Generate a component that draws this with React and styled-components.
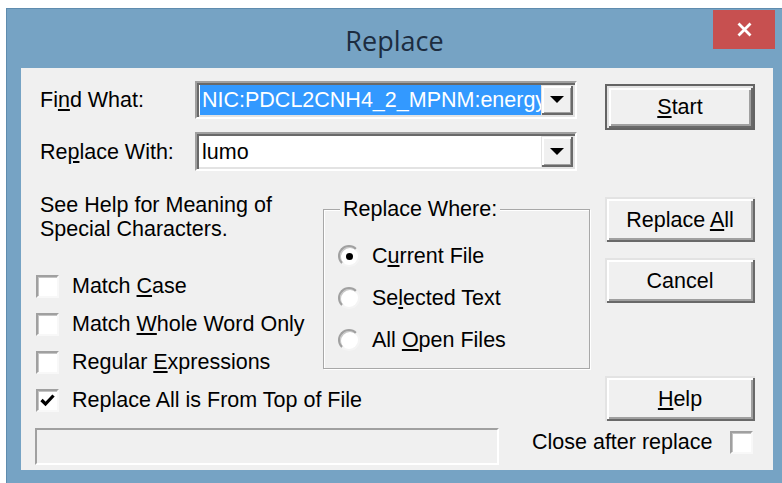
import styled, { createGlobalStyle } from 'styled-components';

const GlobalStyle = createGlobalStyle`
  html, body {
    margin: 0;
    padding: 0;
    background: #ffffff;
  }
  body {
    width: 782px;
    height: 483px;
    overflow: hidden;
    font-family: "Liberation Sans", Arial, sans-serif;
  }
`;

const Window = styled.div`
  box-sizing: border-box;
  margin: 8px 0 0 6px;
  width: 776px;
  height: 475px;
  background: #76a3c4;
  border-top: 1px solid #5f8cae;
  border-left: 1px solid #5f8cae;
  padding: 0 9px 13px 14px;
  display: flex;
  flex-direction: column;
`;

const TitleBar = styled.div`
  height: 59px;
  margin: 0 -9px 0 -14px;
  display: grid;
  grid-template-columns: 1fr auto 1fr;
`;

const Title = styled.div`
  grid-column: 2;
  align-self: center;
  padding-top: 3px;
  font-family: "Open Sans", "Noto Sans", sans-serif;
  font-size: 27px;
  color: #1c2c40;
`;

const CloseButton = styled.div`
  grid-column: 3;
  justify-self: end;
  align-self: start;
  margin: 1px 7px 0 0;
  width: 62px;
  height: 39px;
  background: #c75050;
  display: flex;
  align-items: center;
  justify-content: center;
`;

const Client = styled.div`
  flex: 1;
  background: #f0f0f0;
  font-size: 21.5px;
  line-height: 24px;
  color: #000;
  display: flex;
  flex-direction: column;
`;

const Key = styled.span`
  text-decoration: underline;
  text-underline-offset: 2px;
`;

/* top block: the two combo rows and the Start button */
const TopRow = styled.div`
  display: flex;
  padding-top: 13px;
`;

const Fields = styled.div`
  display: flex;
  flex-direction: column;
  gap: 13px;
  margin-left: 19px;
`;

const FieldRow = styled.div`
  display: flex;
  align-items: center;
`;

const FieldLabel = styled.div`
  width: 155px;
`;

const Combo = styled.div`
  box-sizing: border-box;
  display: flex;
  width: 382px;
  height: ${(p) => p.$h}px;
  padding: 2px;
  background: #fff;
  border: 2px solid;
  border-color: #a0a0a0 #ffffff #ffffff #a0a0a0;
  box-shadow: inset 2px 2px 0 #696969, inset -2px -2px 0 #e3e3e3;
`;

const Edit = styled.div`
  flex: 1;
  display: flex;
  align-items: center;
  overflow: hidden;
  white-space: nowrap;
  padding-left: 3px;
`;

const Selected = styled.div`
  align-self: stretch;
  display: flex;
  align-items: center;
  margin-left: -2px;
  padding-left: 2px;
  flex: 1;
  overflow: hidden;
  background: #3399ff;
  color: #fff;
`;

const DropButton = styled.div`
  box-sizing: border-box;
  width: 32px;
  background: #f0f0f0;
  display: flex;
  align-items: center;
  justify-content: center;
  box-shadow: inset 1px 1px 0 #e3e3e3, inset -2px -2px 0 #696969,
    inset 3px 3px 0 #ffffff, inset -3px -3px 0 #a0a0a0;
`;

const Button = styled.div`
  box-sizing: border-box;
  width: 150px;
  height: ${(p) => p.$h || 45}px;
  margin-top: ${(p) => p.$mt || 0}px;
  background: #f0f0f0;
  display: flex;
  align-items: center;
  justify-content: center;
  border: ${(p) => (p.$default ? '2px solid #646464' : 'none')};
  box-shadow: inset 2px 2px 0 #e3e3e3, inset -2px -2px 0 #696969,
    inset 4px 4px 0 #ffffff, inset -4px -4px 0 #a0a0a0;
`;

const StartCol = styled.div`
  margin: 3px 0 0 28px;
`;

/* middle block: options, the radio group and the side buttons */
const MiddleRow = styled.div`
  display: flex;
  margin-top: 22px;
`;

const LeftCol = styled.div`
  width: 302px;
  display: flex;
  flex-direction: column;
`;

const HelpText = styled.div`
  margin-left: 19px;
`;

const CheckList = styled.div`
  margin-top: 26px;
  display: flex;
  flex-direction: column;
`;

const CheckRow = styled.div`
  height: 38px;
  display: flex;
  align-items: center;
  gap: 13px;
  margin-left: 15px;
  white-space: nowrap;
`;

const Box = styled.div`
  box-sizing: border-box;
  width: 23px;
  height: 23px;
  flex-shrink: 0;
  background: #fff;
  border: 2px solid;
  border-color: #a0a0a0 #f8f8f8 #f8f8f8 #a0a0a0;
  box-shadow: inset 1px 1px 0 #c4c4c4;
  display: flex;
  align-items: center;
  justify-content: center;
`;

const GroupBox = styled.div`
  box-sizing: border-box;
  margin-top: 16px;
  width: 267px;
  height: 160px;
  border: 1px solid #a8a8a8;
  box-shadow: inset 1px 1px 0 #ffffff, 1px 1px 0 #ffffff;
  display: flex;
  flex-direction: column;
`;

const Legend = styled.div`
  align-self: flex-start;
  margin: -13px 0 0 16px;
  padding: 0 3px;
  background: #f0f0f0;
`;

const RadioList = styled.div`
  margin-top: 14px;
  display: flex;
  flex-direction: column;
`;

const RadioRow = styled.div`
  height: 42px;
  display: flex;
  align-items: center;
  gap: 12px;
  margin-left: 14px;
`;

const Radio = styled.div`
  box-sizing: border-box;
  width: 22px;
  height: 22px;
  border-radius: 50%;
  background: #fff;
  border: 2px solid;
  border-color: #a0a0a0 #f4f4f4 #f4f4f4 #a0a0a0;
  box-shadow: inset 1px 1px 0 #c8c8c8;
  display: flex;
  align-items: center;
  justify-content: center;

  &::after {
    content: '';
    display: ${(p) => (p.$on ? 'block' : 'none')};
    width: 7px;
    height: 7px;
    border-radius: 50%;
    background: #000;
  }
`;

const ButtonCol = styled.div`
  margin-left: 15px;
  display: flex;
  flex-direction: column;
`;

/* bottom block: status line and close option */
const BottomRow = styled.div`
  display: flex;
  align-items: flex-start;
  margin-top: 7px;
`;

const Status = styled.div`
  box-sizing: border-box;
  margin-left: 14px;
  width: 464px;
  height: 37px;
  border: 2px solid;
  border-color: #a0a0a0 #ffffff #ffffff #a0a0a0;
  background: #f0f0f0;
`;

const CloseOption = styled.div`
  margin: 2px 0 0 33px;
  display: flex;
  align-items: center;
  gap: 18px;
  white-space: nowrap;
`;

const DownArrow = () => (
  <svg width="14" height="8" viewBox="0 0 14 8">
    <path d="M0 0 H14 L7 7 Z" fill="#000" />
  </svg>
);

const CheckMark = () => (
  <svg width="15" height="13" viewBox="0 0 15 13">
    <path d="M1.5 6 L5.5 10 L13.5 1.5" fill="none" stroke="#000" strokeWidth="3.2" />
  </svg>
);

const CloseGlyph = () => (
  <svg width="15" height="15" viewBox="0 0 15 15">
    <path d="M1.5 1.5 L13.5 13.5 M13.5 1.5 L1.5 13.5" stroke="#fff" strokeWidth="2.8" />
  </svg>
);

const options = [
  { label: <>Match <Key>C</Key>ase</>, checked: false },
  { label: <>Match <Key>W</Key>hole Word Only</>, checked: false },
  { label: <>Regular <Key>E</Key>xpressions</>, checked: false },
  { label: <>Replace All is From Top of File</>, checked: true },
];

const places = [
  { label: <>C<Key>u</Key>rrent File</>, on: true },
  { label: <>Se<Key>l</Key>ected Text</>, on: false },
  { label: <>All <Key>O</Key>pen Files</>, on: false },
];

export default function App() {
  return (
    <>
      <GlobalStyle />
      <Window>
        <TitleBar>
          <Title>Replace</Title>
          <CloseButton>
            <CloseGlyph />
          </CloseButton>
        </TitleBar>

        <Client>
          <TopRow>
            <Fields>
              <FieldRow>
                <FieldLabel>Fi<Key>n</Key>d What:</FieldLabel>
                <Combo $h={38}>
                  <Edit>
                    <Selected>NIC:PDCL2CNH4_2_MPNM:energy</Selected>
                  </Edit>
                  <DropButton>
                    <DownArrow />
                  </DropButton>
                </Combo>
              </FieldRow>
              <FieldRow>
                <FieldLabel>Re<Key>p</Key>lace With:</FieldLabel>
                <Combo $h={39}>
                  <Edit>lumo</Edit>
                  <DropButton>
                    <DownArrow />
                  </DropButton>
                </Combo>
              </FieldRow>
            </Fields>
            <StartCol>
              <Button $default $h={46}>
                <span><Key>S</Key>tart</span>
              </Button>
            </StartCol>
          </TopRow>

          <MiddleRow>
            <LeftCol>
              <HelpText>
                See Help for Meaning of
                <br />
                Special Characters.
              </HelpText>
              <CheckList>
                {options.map((o, i) => (
                  <CheckRow key={i}>
                    <Box>{o.checked && <CheckMark />}</Box>
                    <span>{o.label}</span>
                  </CheckRow>
                ))}
              </CheckList>
            </LeftCol>

            <GroupBox>
              <Legend>Replace Where:</Legend>
              <RadioList>
                {places.map((p, i) => (
                  <RadioRow key={i}>
                    <Radio $on={p.on} />
                    <span>{p.label}</span>
                  </RadioRow>
                ))}
              </RadioList>
            </GroupBox>

            <ButtonCol>
              <Button $mt={4}>
                <span>Replace <Key>A</Key>ll</span>
              </Button>
              <Button $mt={16}>Cancel</Button>
              <Button $mt={73}>
                <span><Key>H</Key>elp</span>
              </Button>
            </ButtonCol>
          </MiddleRow>

          <BottomRow>
            <Status />
            <CloseOption>
              <span>Close after replace</span>
              <Box />
            </CloseOption>
          </BottomRow>
        </Client>
      </Window>
    </>
  );
}
